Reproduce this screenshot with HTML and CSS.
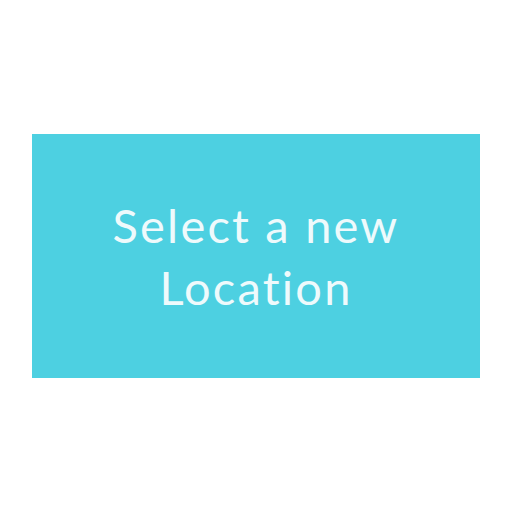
FILE: index.html
```html
<!DOCTYPE html>
<html>
<head>
<meta charset="utf-8">
<link rel="stylesheet" href="styles.css">
</head>
<body>
<div class="page">
  <button class="tile">Select a new Location</button>
</div>
</body>
</html>
```
FILE: styles.css
```css
html, body {
  margin: 0;
  padding: 0;
  background: #ffffff;
}
.page {
  width: 512px;
  height: 512px;
  display: flex;
  align-items: center;
  justify-content: center;
}
.tile {
  width: 448px;
  height: 244px;
  border: none;
  margin: 0;
  padding: 0 40px;
  background: #4dd0e1;
  color: #eefafc;
  font-family: Lato, "Open Sans", sans-serif;
  font-weight: 400;
  font-size: 47px;
  line-height: 62px;
  letter-spacing: 2.2px;
  font-variant-ligatures: none;
  text-align: center;
  display: flex;
  align-items: center;
  justify-content: center;
}
```
